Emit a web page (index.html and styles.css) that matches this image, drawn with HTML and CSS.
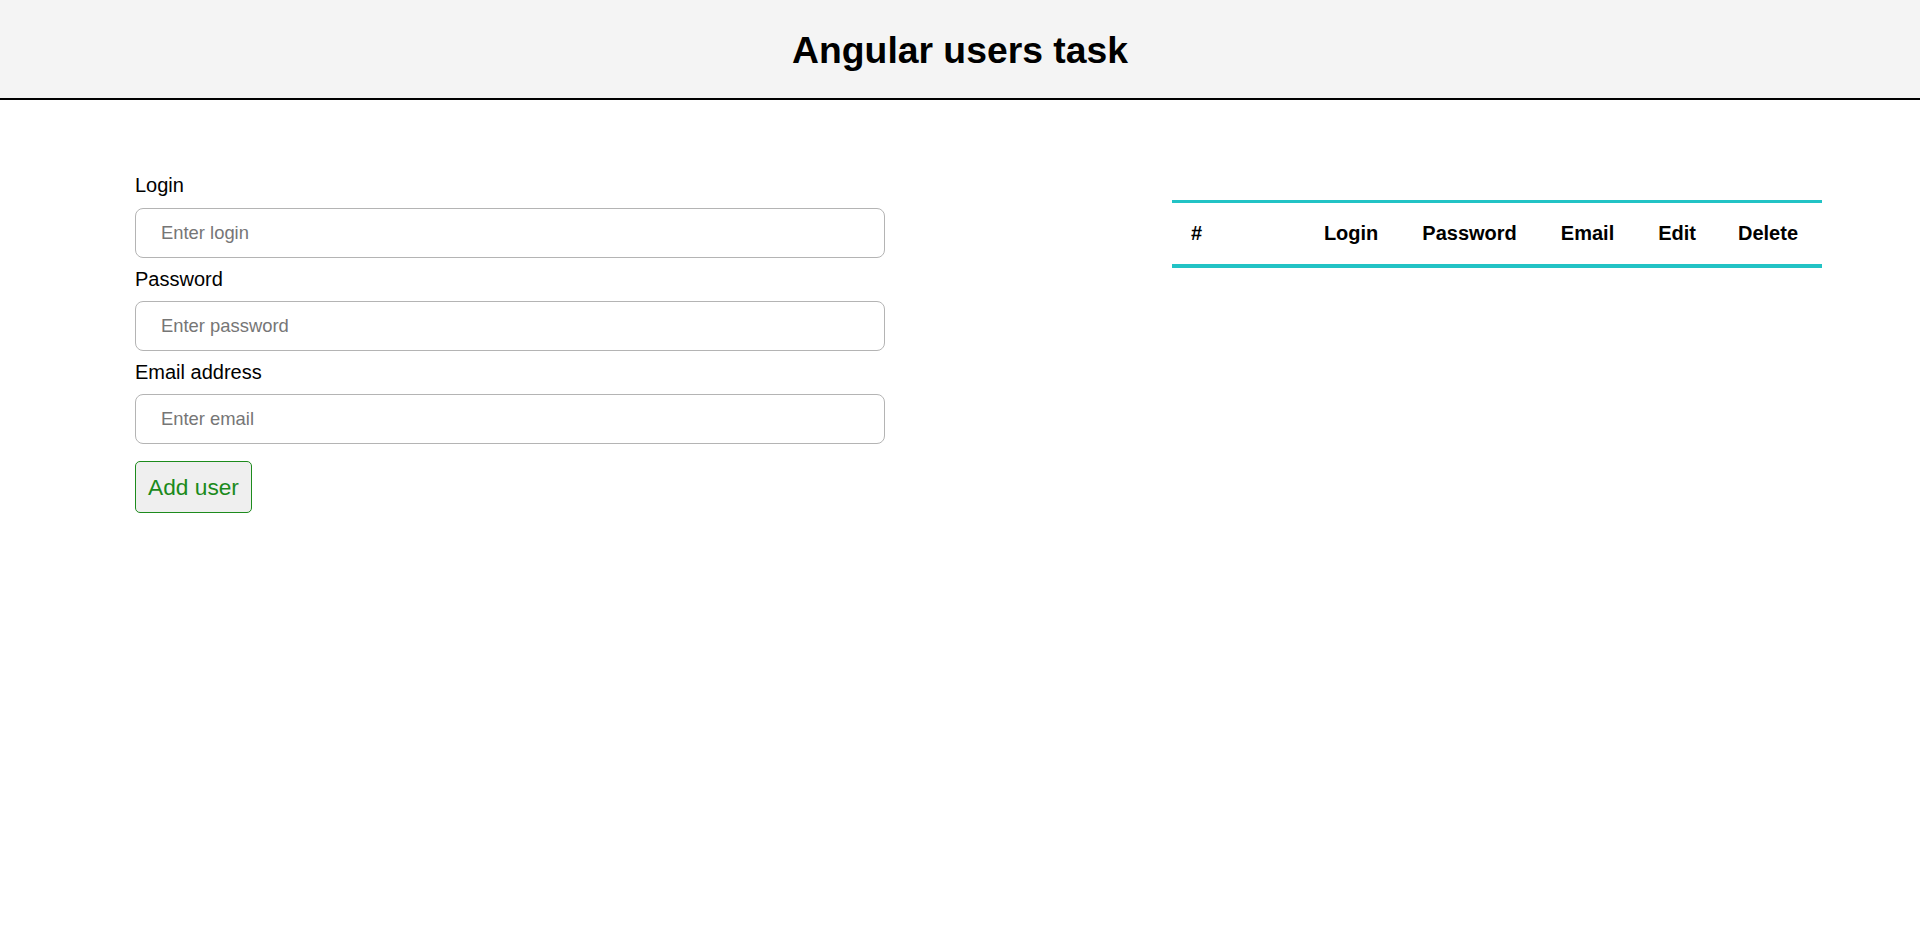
FILE: index.html
```html
<!DOCTYPE html>
<html lang="en">
<head>
<meta charset="utf-8">
<title>Angular users task</title>
<link rel="stylesheet" href="styles.css">
</head>
<body>
<header class="top-bar">
  <h1 class="title">Angular users task</h1>
</header>
<main class="content">
  <form class="user-form">
    <label class="field-label" for="login">Login</label>
    <input class="field-input" id="login" type="text" placeholder="Enter login">
    <label class="field-label" for="password">Password</label>
    <input class="field-input" id="password" type="password" placeholder="Enter password">
    <label class="field-label" for="email">Email address</label>
    <input class="field-input" id="email" type="email" placeholder="Enter email">
    <button class="add-btn" type="button">Add user</button>
  </form>
  <table class="users-table">
    <thead>
      <tr>
        <th class="col-num">#</th>
        <th>Login</th>
        <th>Password</th>
        <th>Email</th>
        <th>Edit</th>
        <th class="col-last">Delete</th>
      </tr>
    </thead>
    <tbody></tbody>
  </table>
</main>
</body>
</html>
```

FILE: styles.css
```css
html, body {
  margin: 0;
  padding: 0;
  background: #ffffff;
  font-family: "Liberation Sans", Arial, sans-serif;
  color: #000;
}

.top-bar {
  background: #f4f4f4;
  border-bottom: 2px solid #000;
  height: 100px;
  box-sizing: border-box;
  padding-top: 30px;
  text-align: center;
}

.title {
  margin: 0;
  font-size: 37.3px;
  line-height: 40px;
  font-weight: bold;
}

.content {
  display: flex;
  align-items: flex-start;
  padding: 75px 0 0 135px;
  gap: 287px;
}

.user-form {
  display: flex;
  flex-direction: column;
  align-items: flex-start;
  width: 750px;
}

.field-label {
  display: block;
  font-size: 20px;
  line-height: 21px;
}

.field-input {
  box-sizing: border-box;
  width: 750px;
  height: 50px;
  margin: 11px 0;
  padding: 0 25px;
  border: 1px solid #b4b4b4;
  border-radius: 8px;
  font-family: "Liberation Sans", Arial, sans-serif;
  font-size: 18.4px;
  color: #000;
  background: #fff;
  outline: none;
}

.field-input:first-of-type {
  margin-top: 12px;
}

.field-input::placeholder {
  color: #767676;
}

.add-btn {
  box-sizing: border-box;
  margin-top: 6px;
  height: 52px;
  width: 117px;
  padding: 0;
  border: 1px solid #1d8b1d;
  border-radius: 5px;
  background: #efefef;
  color: #1b8a1b;
  font-family: "Liberation Sans", Arial, sans-serif;
  font-size: 22.7px;
  cursor: pointer;
}

.users-table {
  margin-top: 25px;
  border-collapse: collapse;
  border-top: 3px solid #22c3c5;
  width: 650px;
}

.users-table th {
  font-size: 20px;
  line-height: 23px;
  font-weight: bold;
  text-align: left;
  padding: 19px 22px;
  border-bottom: 4px solid #22c3c5;
  white-space: nowrap;
}

.users-table th.col-num {
  width: 86px;
  padding-left: 19px;
  padding-right: 25px;
}

.users-table th.col-last {
  padding-left: 20px;
  padding-right: 24px;
}
```
